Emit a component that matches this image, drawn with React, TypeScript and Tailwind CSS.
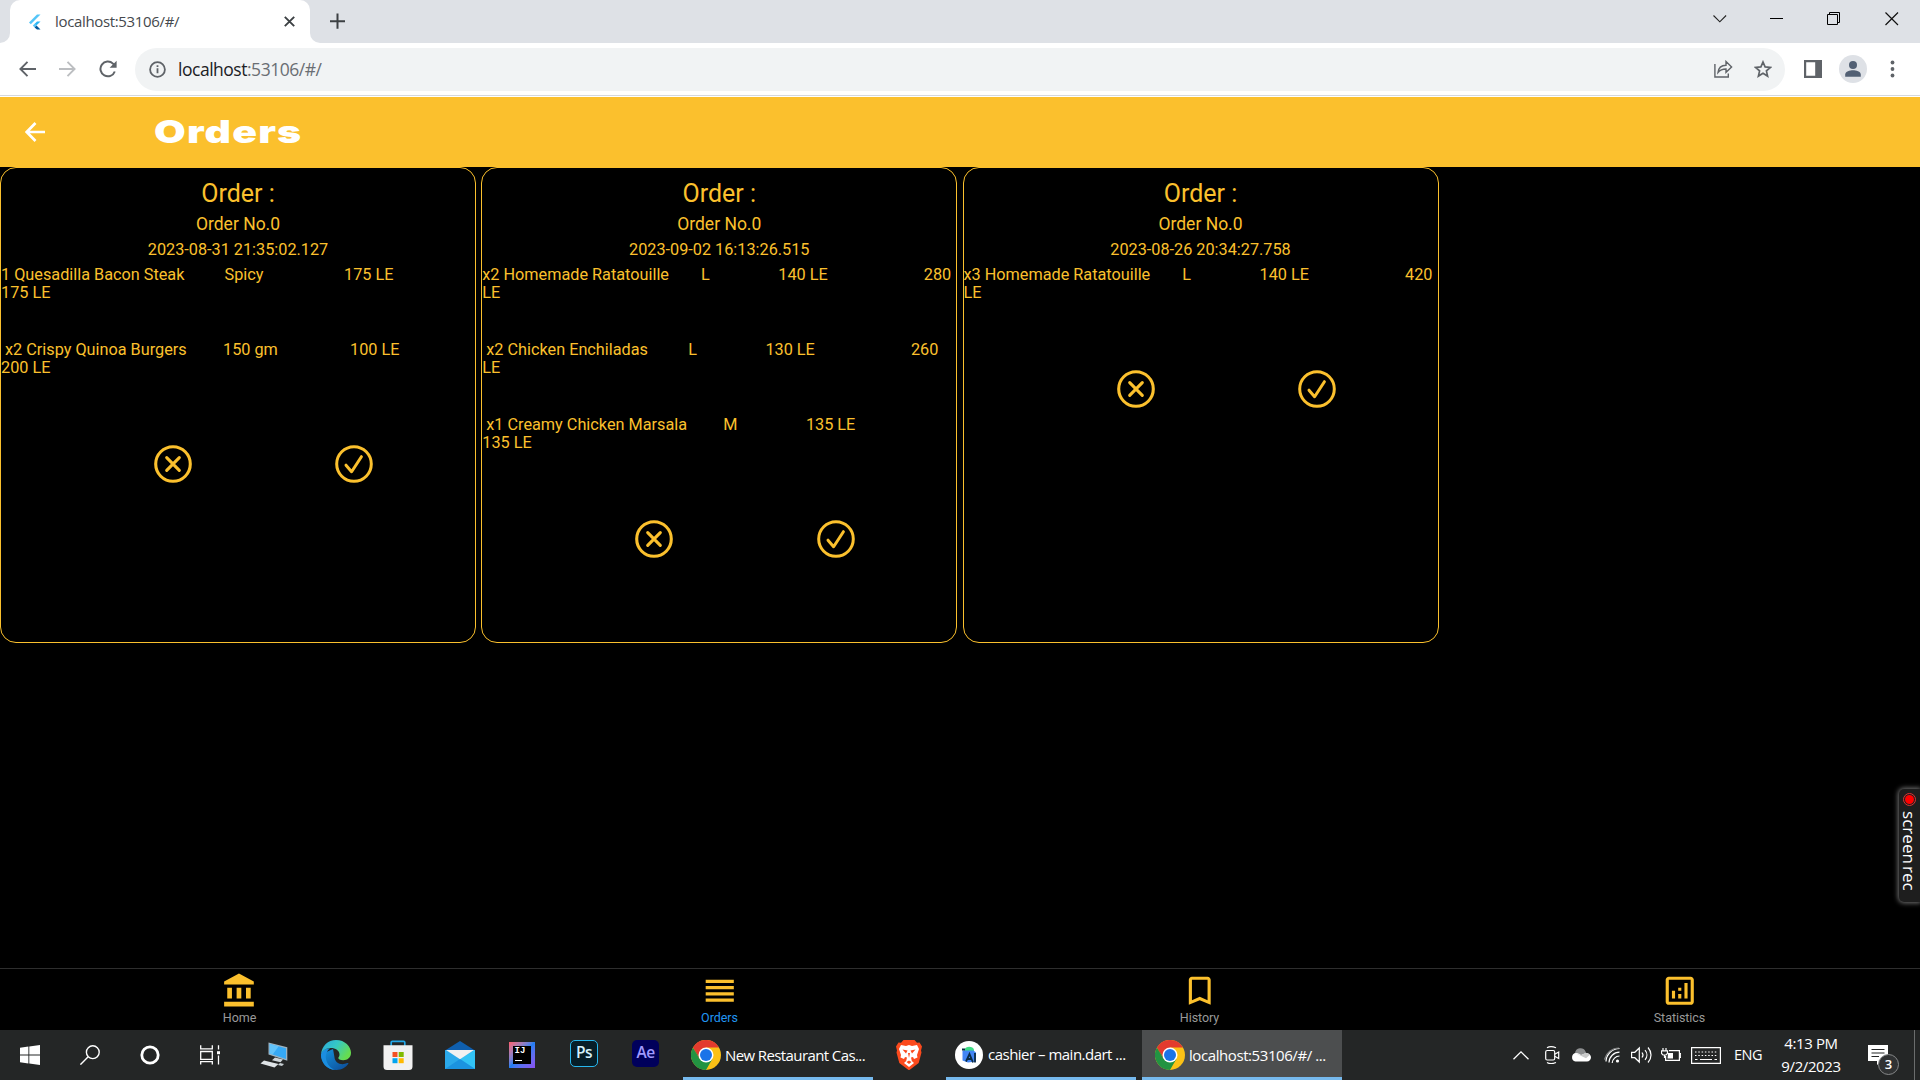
import type { ReactNode } from "react";

type Cell = { text: string; width: string };
type Item = { cells: Cell[]; wrap: string; indent: boolean };
type Order = { date: string; items: Item[] };

const orders: Order[] = [
  {
    date: "2023-08-31 21:35:02.127",
    items: [
      {
        indent: false,
        cells: [
          { text: "1 Quesadilla Bacon Steak", width: "w-[223.5px]" },
          { text: "Spicy", width: "w-[119.5px]" },
          { text: "175 LE", width: "w-[60px]" },
        ],
        wrap: "175 LE",
      },
      {
        indent: true,
        cells: [
          { text: "x2 Crispy Quinoa Burgers", width: "w-[218px]" },
          { text: "150 gm", width: "w-[127px]" },
          { text: "100 LE", width: "w-[60px]" },
        ],
        wrap: "200 LE",
      },
    ],
  },
  {
    date: "2023-09-02 16:13:26.515",
    items: [
      {
        indent: false,
        cells: [
          { text: "x2 Homemade Ratatouille", width: "w-[218.7px]" },
          { text: "L", width: "w-[77.4px]" },
          { text: "140 LE", width: "w-[145.5px]" },
          { text: "280", width: "w-[28px]" },
        ],
        wrap: "LE",
      },
      {
        indent: true,
        cells: [
          { text: "x2 Chicken Enchiladas", width: "w-[202px]" },
          { text: "L", width: "w-[77.2px]" },
          { text: "130 LE", width: "w-[145.5px]" },
          { text: "260", width: "w-[28px]" },
        ],
        wrap: "LE",
      },
      {
        indent: true,
        cells: [
          { text: "x1 Creamy Chicken Marsala", width: "w-[237px]" },
          { text: "M", width: "w-[82.7px]" },
          { text: "135 LE", width: "w-[60px]" },
        ],
        wrap: "135 LE",
      },
    ],
  },
  {
    date: "2023-08-26 20:34:27.758",
    items: [
      {
        indent: false,
        cells: [
          { text: "x3 Homemade Ratatouille", width: "w-[218.7px]" },
          { text: "L", width: "w-[77.4px]" },
          { text: "140 LE", width: "w-[145.5px]" },
          { text: "420", width: "w-[28px]" },
        ],
        wrap: "LE",
      },
    ],
  },
];

function BrowserChrome() {
  return (
    <header className="h-[97px] shrink-0 bg-white font-['Open_Sans','Noto_Sans',sans-serif]">
      <div className="flex h-[43px] items-stretch bg-[#dee1e6]">
        <div className="w-[10px] bg-white">
          <div className="h-full rounded-br-[10px] bg-[#dee1e6]" />
        </div>
        <div className="flex w-[300px] items-center rounded-t-[10px] bg-white pb-[1px]">
          <svg className="ml-[18px] mt-[1px]" width="13" height="16" viewBox="0 0 13 16">
            <path d="M1 8.5 9 .5h3.5L2.8 10.3z" fill="#54c5f8" />
            <path d="M9 7.5h3.5L8.3 11.6 6.5 9.9z" fill="#29b6f6" />
            <path d="m4.8 11.6 1.8-1.8 1.9 1.8-1.9 2z" fill="#54c5f8" />
            <path d="m6.6 13.6 1.9-2 4 4H9z" fill="#01579b" />
          </svg>
          <span className="ml-[14px] w-[220px] text-[15px] tracking-[-0.34px] text-[#45494d]">localhost:53106/#/</span>
          <svg className="ml-[9px] mt-[1px]" width="11" height="11" viewBox="0 0 11 11" stroke="#3c4043" strokeWidth="1.9">
            <path d="m.8.8 9.4 9.4M10.2.8.8 10.2" />
          </svg>
        </div>
        <div className="w-[20px] bg-white">
          <div className="h-full rounded-bl-[10px] bg-[#dee1e6]" />
        </div>
        <svg className="mt-[13px]" width="15" height="16" viewBox="0 0 15 16" stroke="#3c4043" strokeWidth="2">
          <path d="M0 8.3h15M7.5.5v15.3" />
        </svg>
        <div className="ml-auto flex items-start pr-[21px] pt-[12px]">
          <svg className="mt-[3px]" width="14" height="8" viewBox="0 0 14 8" fill="none" stroke="#222" strokeWidth="1.1">
            <path d="m.5.5 6.3 6.3L13.1.5" />
          </svg>
          <div className="ml-[43px] mt-[6px] h-px w-[13px] bg-black" />
          <svg className="ml-[44px]" width="14" height="14" viewBox="0 0 14 14" fill="none" stroke="#000">
            <path d="M.5 2.5h10v10H.5zM2.5 2.5v-2h10v10h-2" />
          </svg>
          <svg className="ml-[44px]" width="14" height="14" viewBox="0 0 14 14" stroke="#111" strokeWidth="1.2">
            <path d="m.5.5 12.5 12.5M13 .5.5 13" />
          </svg>
        </div>
      </div>
      <div className="flex h-[53px] items-center border-b border-[#d5d8dc]">
        <svg className="ml-[19px]" width="17" height="16" viewBox="0 0 17 16" fill="none" stroke="#5f6368" strokeWidth="1.9">
          <path d="M17 8H1.5M8.5.8 1.4 8l7.1 7.2" />
        </svg>
        <svg className="ml-[23px]" width="17" height="16" viewBox="0 0 17 16" fill="none" stroke="#bcbec1" strokeWidth="1.9">
          <path d="M0 8h15.5M8.5.8 15.6 8l-7.1 7.2" />
        </svg>
        <svg className="ml-[23px]" width="18" height="18" viewBox="0 0 18 18" fill="none" stroke="#5f6368" strokeWidth="2">
          <path d="M15.8 11.5A7.4 7.4 0 1 1 14 3.6l1.5 1.6" />
          <path d="M17.6.8v7h-7z" fill="#5f6368" stroke="none" />
        </svg>
        <div className="ml-[18px] flex h-[43px] w-[1650px] items-center rounded-full bg-[#f1f3f4]">
          <svg className="ml-[14px]" width="17" height="17" viewBox="0 0 17 17" fill="none" stroke="#5f6368" strokeWidth="1.8">
            <circle cx="8.5" cy="8.5" r="7.4" />
            <path d="M8.5 7.3v5M8.5 4.2v1.8" />
          </svg>
          <span className="ml-[12px] text-[17.5px] tracking-[-0.48px] text-[#6a6e73]">
            <span className="text-[#202124]">localhost</span>:53106/#/
          </span>
          <svg className="ml-auto" width="19" height="18" viewBox="0 0 19 18" fill="none" stroke="#5f6368" strokeWidth="1.4">
            <path d="M.9 4v13h13.4v-3.5" />
            <path d="M4 12.5c.5-5 3.5-7.2 8-7.3V1.5l5.6 5.5-5.6 5.3V9C8.5 9 6 10 4 12.5z" />
          </svg>
          <svg className="ml-[21px] mr-[13px]" width="18" height="18" viewBox="0 0 18 18" fill="none" stroke="#5f6368" strokeWidth="1.7">
            <path d="m9 2 2.1 4.9 5.3.5-4 3.5 1.2 5.2L9 13.3l-4.6 2.8 1.2-5.2-4-3.5 5.3-.5z" />
          </svg>
        </div>
        <svg className="ml-[19px]" width="18" height="18" viewBox="0 0 18 18">
          <path fill="#5f6368" fillRule="evenodd" d="M0 0h18v18H0zM2.2 2.2v13.6h9V2.2z" />
        </svg>
        <svg className="ml-[17px]" width="28" height="28" viewBox="0 0 28 28">
          <circle cx="14" cy="14" r="14" fill="#dee1e6" />
          <circle cx="14" cy="10" r="4" fill="#526074" />
          <path d="M6.2 21.7v-2.2c0-2.9 4.8-4.2 7.8-4.2s7.8 1.3 7.8 4.2v2.2z" fill="#526074" />
        </svg>
        <svg className="ml-[23px]" width="5" height="18" viewBox="0 0 5 18" fill="#5f6368">
          <circle cx="2.5" cy="2.5" r="1.9" />
          <circle cx="2.5" cy="9" r="1.9" />
          <circle cx="2.5" cy="15.5" r="1.9" />
        </svg>
      </div>
    </header>
  );
}

function OrderCard({ order }: { order: Order }) {
  return (
    <section className="flex h-[476px] w-[476px] shrink-0 flex-col rounded-[16px] border border-[#fbc02d] text-[16.25px] leading-[18px]">
      <h2 className="mt-[11px] text-center text-[25px] leading-[30px]">Order :</h2>
      <p className="mt-[5px] text-center text-[17.5px] leading-[20px]">Order No.0</p>
      <p className="mt-[7px] text-center">{order.date}</p>
      <div className="mt-[7px]">
        {order.items.map((item) => (
          <div key={item.cells[0].text} className="h-[75px] whitespace-nowrap">
            <div className={item.indent ? "flex pl-[4px]" : "flex"}>
              {item.cells.map((cell) => (
                <span key={cell.text} className={`${cell.width} shrink-0`}>
                  {cell.text}
                </span>
              ))}
            </div>
            <div>{item.wrap}</div>
          </div>
        ))}
      </div>
      <div className="mt-[29px] flex gap-[143.3px] pl-[153px]">
        <svg width="38" height="38" viewBox="0 0 38 38" fill="none" stroke="#fbc02d" strokeWidth="3.1" strokeLinecap="round">
          <circle cx="19" cy="19" r="17.3" />
          <path d="m12.7 12.7 12.6 12.6M25.3 12.7 12.7 25.3" />
        </svg>
        <svg width="38" height="38" viewBox="0 0 38 38" fill="none" stroke="#fbc02d" strokeWidth="3" strokeLinecap="round" strokeLinejoin="round">
          <circle cx="19" cy="19" r="17.3" />
          <path d="m11 20.2 5.6 6.5 9.8-15" />
        </svg>
      </div>
    </section>
  );
}

const tabs = [
  {
    label: "Home",
    color: "text-[#999]",
    path: "M4 10v7h3v-7H4zm6 0v7h3v-7h-3zM2 22h19v-3H2v3zm14-12v7h3v-7h-3zm-4.5-9L2 6v2h19V6l-9.5-5z",
  },
  {
    label: "Orders",
    color: "text-[#2196f3]",
    path: "M3 15h18v-2H3v2zm0 4h18v-2H3v2zm0-8h18V9H3v2zm0-6v2h18V5H3z",
  },
  {
    label: "History",
    color: "text-[#999]",
    path: "M17 3H7c-1.1 0-2 .9-2 2v16l7-3 7 3V5c0-1.1-.9-2-2-2zm0 15-5-2.18L7 18V5h10v13z",
  },
  {
    label: "Statistics",
    color: "text-[#999]",
    path: "M19 3H5c-1.1 0-2 .9-2 2v14c0 1.1.9 2 2 2h14c1.1 0 2-.9 2-2V5c0-1.1-.9-2-2-2zm0 16H5V5h14v14zM7 12h2v5H7zM15 7h2v10h-2zM11 14h2v3h-2zM11 10h2v2h-2z",
  },
];

function BottomTabs() {
  return (
    <nav className="grid h-[62px] shrink-0 grid-cols-4 border-t border-[#2e2e2e] bg-black">
      {tabs.map((tab) => (
        <div key={tab.label} className="flex flex-col items-center">
          <svg className="mt-[2.5px] shrink-0" width="37.5" height="37.5" viewBox="0 0 24 24" fill="#fbc02d">
            <path d={tab.path} />
          </svg>
          <span className={`mt-[2px] mr-[1px] text-[12.5px] leading-[14px] tracking-[-0.05px] ${tab.color}`}>{tab.label}</span>
        </div>
      ))}
    </nav>
  );
}

function ChromeLogo() {
  return (
    <svg className="shrink-0" width="30" height="30" viewBox="0 0 30 30">
      <circle cx="15" cy="15" r="15" fill="#fbc116" />
      <path d="M15 15 2 7.5A15 15 0 0 1 28 7.5H15z" fill="#e33b2e" />
      <path d="M2 7.5A15 15 0 0 0 15 30l6.5-11.2L15 15l-6.5 3.7z" fill="#229342" />
      <path d="M2 7.5 8.5 18.7 15 15V7.5z" fill="#e33b2e" />
      <path d="M2 7.5 8.5 18.7 10 20 3 9z" fill="#229342" />
      <circle cx="15" cy="15" r="7.5" fill="#fff" />
      <circle cx="15" cy="15" r="6" fill="#1a73e8" />
    </svg>
  );
}

function Slot({ width, children }: { width: string; children: ReactNode }) {
  return <div className={`${width} flex h-full shrink-0 items-center justify-center`}>{children}</div>;
}

function Taskbar() {
  return (
    <footer className="flex h-[50px] shrink-0 items-center bg-[#242626] font-['Open_Sans','Noto_Sans',sans-serif] text-white">
      <Slot width="w-[60px]">
        <svg width="20" height="20" viewBox="0 0 20 20" fill="#fff">
          <path d="M0 2.7 8.4 1.5v8H0zM9.3 1.4 20 0v9.5H9.3zM0 10.4h8.4v8.1L0 17.3zM9.3 10.4H20V20L9.3 18.6z" />
        </svg>
      </Slot>
      <Slot width="w-[60px]">
        <svg width="20" height="20" viewBox="0 0 20 20" fill="none" stroke="#fff" strokeWidth="1.4">
          <circle cx="12.8" cy="7.2" r="6.4" />
          <path d="M8.2 11.8.4 19.6" />
        </svg>
      </Slot>
      <Slot width="w-[60px]">
        <svg width="20" height="20" viewBox="0 0 20 20" fill="none" stroke="#fff" strokeWidth="2.8">
          <circle cx="10" cy="10" r="8.2" />
        </svg>
      </Slot>
      <Slot width="w-[60px]">
        <svg width="20" height="20" viewBox="0 0 20 20" fill="none" stroke="#fff" strokeWidth="1.3">
          <path d="M.7.2v3.6h11.6V.2M.7 6.5h11.6v7.8H.7zM.7 19.5v-2.9h11.6v2.9M18.5.2v4.3M18.5 10.5v9" />
          <path d="M17 6.2h3v3h-3z" fill="#fff" stroke="none" />
        </svg>
      </Slot>
      <Slot width="w-[67px]">
        <svg width="28" height="26" viewBox="0 0 28 26">
          <path d="m8.5.5 18.8 4.8v13.5L8.5 12.5z" fill="#9fb4c1" />
          <path d="m9.7 2 16.3 4.3V17L9.7 11.5z" fill="#36a9f5" />
          <path d="m9.7 2 9 2.3-6 8.3-3-1.1z" fill="#62c3fa" />
          <path d="m15 15.5 8 2-2.5 2.8-8.5-2z" fill="#cfd6da" />
          <path d="m4 18.5 14.5 3.5-4 3.5L.5 21.5z" fill="#dfe4e7" />
          <path d="m20 21 4 1-2 2-4-1z" fill="#c5cdd2" />
        </svg>
      </Slot>
      <Slot width="w-[58px]">
        <svg width="30" height="30" viewBox="0 0 30 30">
          <defs>
            <linearGradient id="edgeTop" x1="0" x2="1" y1="0" y2=".5">
              <stop offset="0" stopColor="#2aa5dc" />
              <stop offset=".5" stopColor="#35c8c6" />
              <stop offset="1" stopColor="#66dd4f" />
            </linearGradient>
            <linearGradient id="edgeBody" x1="0" x2="1" y1="0" y2="1">
              <stop offset="0" stopColor="#1596e0" />
              <stop offset="1" stopColor="#0c4a96" />
            </linearGradient>
          </defs>
          <path d="M0 14.5C0 22 5.5 30 15.5 30c5 0 9.5-2.5 11.8-6.2.4-.8-.3-1-.9-.7-6.5 3-12.8-.4-13-6.4L12 9z" fill="url(#edgeBody)" />
          <path d="M0 14.5C.7 10.5 4.500 8 9 8.500c-3 2-4.800 6-4 10.500.9 5 5 10 9.500 11C5.500 29.800 0 22.500 0 14.500z" fill="#1b8ee0" />
          <path d="M0 14.5C.6 6 7 0 15 0c9 0 15 6.500 15 12.800 0 4.800-3.700 7.500-7.700 7.500-3.300 0-5-1.200-5-2.200 0-.8 1.200-1.400 1.200-3.600C18.500 10.500 14.500 8 9.800 8 4.500 8 .9 11 0 14.500z" fill="url(#edgeTop)" />
        </svg>
      </Slot>
      <Slot width="w-[65px]">
        <svg width="30" height="30" viewBox="0 0 30 30">
          <path d="M8.2 7V2.5c0-.7.5-1.2 1.2-1.2h11.2c.7 0 1.2.5 1.2 1.2V7" fill="none" stroke="#24a8e8" strokeWidth="1.7" />
          <path d="M.5 5.3h29v21.2a3.5 3.5 0 0 1-3.5 3.5H4a3.5 3.5 0 0 1-3.5-3.5z" fill="#f1f1f1" />
          <path d="M9.5 12h5v5h-5z" fill="#f25022" />
          <path d="M15.7 12h5v5h-5z" fill="#7fba00" />
          <path d="M9.5 18.2h5v5h-5z" fill="#00a4ef" />
          <path d="M15.7 18.2h5v5h-5z" fill="#ffb900" />
        </svg>
      </Slot>
      <Slot width="w-[59px]">
        <svg width="30" height="28" viewBox="0 0 30 28">
          <path d="M0 9.5 15 0l15 9.5z" fill="#0f5fae" />
          <path d="M0 9h30v19H0z" fill="#2ba9ea" />
          <path d="M15 18 30 9v19z" fill="#32c3f5" />
          <path d="m0 28 15-10 15 10z" fill="#1b93e0" />
          <path d="M1 9h28l-14 9.3z" fill="#f1f1f1" />
        </svg>
      </Slot>
      <Slot width="w-[65px]">
        <div className="flex size-[26px] items-center justify-center bg-linear-to-br from-[#fe5a6a] via-[#1d7df2] to-[#8a4ff0]">
          <div className="flex size-[18px] flex-col bg-black pl-[2px] pt-[1px] font-['Liberation_Mono',monospace] text-[9px] font-bold leading-[9px]">
            IJ
            <div className="mt-[4px] h-[1px] w-[7px] bg-white" />
          </div>
        </div>
      </Slot>
      <Slot width="w-[60px]">
        <div className="mb-[3px] flex h-[27px] w-[28px] items-center justify-center rounded-[5px] border-[1.5px] border-[#27b8ef] bg-[#071e28] pb-[1px] text-[15.5px] font-semibold tracking-[-0.5px] text-[#d5f1fb]">Ps</div>
      </Slot>
      <Slot width="w-[63px]">
        <div className="mb-[3px] flex h-[27px] w-[27px] items-center justify-center rounded-[5px] bg-[#00005b] pb-[1px] text-[15.5px] font-semibold tracking-[-0.5px] text-[#a09bff]">Ae</div>
      </Slot>
      <div className="ml-[6px] flex h-full w-[190px] items-center border-b-[3px] border-[#76b9ed] pl-[8px] pt-[3px] text-[15px]">
        <ChromeLogo />
        <span className="ml-[4px] whitespace-nowrap tracking-[-0.6px]">New Restaurant Cas...</span>
      </div>
      <Slot width="w-[73px]">
        <svg className="mr-[2px]" width="26" height="30" viewBox="0 0 26 30">
          <path d="M7.5 0h11l2.5 2.8 2.5-.3 2.5 4-1 4 .5 2-2.8 10.5L13.5 30h-1L3.3 23 .5 12.5l.5-2-1-4 2.5-4 2.5.3z" fill="#fb4a1d" />
          <path d="m5 5 5 1 3-1 3 1 5-1 2 4-2 6 .5 2.5-3.5 1.5-1-2-2 .5.8 3.5L18 23l-5 4-5-4 2.2-2 .8-3.5-2-.5-1 2-3.5-1.5L5 15 3 9z" fill="#fff" />
          <path d="m6.5 9.5 5 1-1.5 3zM19.5 9.5l-5 1 1.5 3zM10.5 22l2.5-1.5 2.5 1.5-2.5 2zM12 13h2l-1 5z" fill="#fb4a1d" />
        </svg>
      </Slot>
      <div className="flex h-full w-[190px] items-center border-b-[3px] border-[#76b9ed] pl-[9px] pt-[2px] text-[15px]">
        <svg className="shrink-0" width="28" height="28" viewBox="0 0 28 28">
          <circle cx="14" cy="14" r="14" fill="#fff" />
          <path d="M9.5 8.5a5 4 0 0 1 9.5 0V11H9.5z" fill="#3ddc84" />
          <path d="M7.5 9.5h11l2.5 2v9l-8 1-5.5-2z" fill="#4285f4" />
          <path d="m11 20.5 3.5-7.5 3.5 8.5M12.5 18h4.5M20 12v9.5" fill="none" stroke="#0a2b45" strokeWidth="1.8" />
          <path d="M7 7.5h3v2H7z" fill="#073042" />
        </svg>
        <span className="ml-[5px] whitespace-nowrap tracking-[-0.51px]">cashier – main.dart ...</span>
      </div>
      <div className="ml-[6px] flex h-full w-[200px] items-center border-b-[3px] border-[#76b9ed] bg-[#4c4e4f] pl-[13px] pt-[3px] text-[15px]">
        <ChromeLogo />
        <span className="ml-[4px] whitespace-nowrap tracking-[-0.42px]">localhost:53106/#/ ...</span>
      </div>
      <div className="ml-auto flex h-full items-center">
        <svg width="16" height="9" viewBox="0 0 16 9" fill="none" stroke="#fff" strokeWidth="1.3">
          <path d="M.5 8.3 8 .9l7.5 7.4" />
        </svg>
        <svg className="ml-[16px]" width="15" height="18" viewBox="0 0 15 18" fill="none" stroke="#fff" strokeWidth="1.2">
          <rect x=".7" y="4.5" width="9" height="9.5" rx="1.5" />
          <path d="m9.7 8.3 4-2.3v6.5l-4-2.3M2 1.8C4 .5 8 .5 11 1.8M2 16.5c2 1.3 6 1.3 9 0" />
        </svg>
        <svg className="ml-[11px]" width="20" height="14" viewBox="0 0 20 14">
          <path d="M4 5a5.500 5.500 0 0 1 10.500-1.500L16 6l-10 5z" fill="#8d8f90" />
          <path d="M4.500 13.500A4.300 4.300 0 0 1 5 5c1.500 0 3 .6 5 2l5-2c3 .3 5 2 5 4.300 0 2.500-1.800 4.200-4 4.200z" fill="#fff" />
          <path d="M4.500 5.200 15 10.200l4-3.500c-1-1.500-2.500-1.900-4.500-1.700L10 7.200z" fill="#c9caca" />
        </svg>
        <svg className="ml-[13px]" width="16" height="17" viewBox="0 0 16 17" fill="none" stroke="#fff" strokeWidth="1.2">
          <path d="M2 14.500A13.500 13.500 0 0 1 15.500 1.500M5 15.500A10.500 10.500 0 0 1 15.500 5.200M8.200 16A7.500 7.500 0 0 1 15.500 9" />
          <path d="M.5 12.500C2 6 8 1 15 1" stroke="#808282" />
          <circle cx="13.5" cy="14" r="1.6" fill="#fff" stroke="none" />
        </svg>
        <svg className="ml-[11px]" width="21" height="18" viewBox="0 0 21 18" fill="none" stroke="#fff" strokeWidth="1.2">
          <path d="M.6 6.300h3.200L8.300 2v14l-4.500-4.300H.6zM11 6.500c1.200 1.500 1.200 3.500 0 5M14 4.200c2.500 2.800 2.500 6.800 0 9.600M17 1.500c4 4.500 4 10.500 0 15" />
        </svg>
        <svg className="ml-[9px]" width="20" height="14" viewBox="0 0 20 14" fill="none" stroke="#fff" strokeWidth="1.2">
          <path d="M8 2.600h10.400v9.800H4.600V8M18.400 5.500h1.300v4h-1.300" />
          <path d="M7 5h5v5.500H6.500z" fill="#fff" stroke="none" />
          <path d="M.5 2.800h6v2.500L5 7H2L.5 5.300zM2 0v2.500M5 0v2.500M3.500 7v3" />
        </svg>
        <svg className="ml-[10px]" width="30" height="17" viewBox="0 0 30 17" fill="none" stroke="#fff" strokeWidth="1.2">
          <path d="M.6.6h28.800v15.800H.6z" />
          <path d="M4 5h22M4 8.500h22" strokeDasharray="1.5 1.8" />
          <path d="M4 12.500h2.500M9 12.500h12M23.500 12.500H26" />
        </svg>
        <span className="ml-[13px] w-[32px] text-[14.5px] tracking-[-0.5px]">ENG</span>
        <div className="ml-[7px] w-[76px] text-center text-[15px] leading-[23px] tracking-[-0.4px]">
          <div>4:13 PM</div>
          <div>9/2/2023</div>
        </div>
        <div className="relative ml-[19px] h-[50px] w-[31px]">
          <svg className="mt-[15px]" width="20" height="20" viewBox="0 0 20 20">
            <path d="M0 0h20v16h-6l-5 4v-4H0z" fill="#fff" />
            <path d="M3.500 4.500h13M3.500 8h13M3.500 11.500H11" stroke="#242626" strokeWidth="1.2" />
          </svg>
          <div className="absolute left-[10px] top-[24px] flex size-[21px] items-center justify-center rounded-full border border-[#868889] bg-[#303233] text-[13px] font-semibold">3</div>
        </div>
        <div className="ml-[15px] mr-[5px] h-full w-px bg-[#6b6d6d]" />
      </div>
    </footer>
  );
}

export default function App() {
  return (
    <div className="relative flex h-[1080px] w-[1920px] flex-col overflow-hidden bg-black font-['Roboto',sans-serif] text-[#fbc02d]">
      <BrowserChrome />
      <div className="flex h-[70px] shrink-0 items-center bg-[#fbc02d]">
        <svg className="ml-[25px]" width="20" height="20" viewBox="0 0 20 20" fill="none" stroke="#fff" strokeWidth="2.7">
          <path d="M20 10H2M10.5 1 1.7 10l8.800 9" />
        </svg>
        <h1 className="ml-[109px] origin-left scale-x-[1.3] text-[31.5px] leading-none font-black tracking-[0.9px] text-white font-['Inter',sans-serif]">Orders</h1>
      </div>
      <main className="flex flex-1 items-start gap-[5.25px]">
        {orders.map((order) => (
          <OrderCard key={order.date} order={order} />
        ))}
      </main>
      <BottomTabs />
      <Taskbar />
      <aside className="absolute right-0 top-[789px] flex h-[113px] w-[21px] flex-col items-center rounded-l-[5px] bg-[#1e1e1e] pt-[4px] font-['Open_Sans',sans-serif] text-white shadow-[0_0_5px_1px_#777]">
        <div className="flex size-[13px] shrink-0 items-center justify-center rounded-full border border-[#d33]">
          <div className="size-[9px] rounded-full bg-[#f00]" />
        </div>
        <span className="mt-[5px] whitespace-nowrap text-[17px] leading-[19px] tracking-[0.05px] [writing-mode:vertical-rl]">
          screen<span className="mt-[2px]">rec</span>
        </span>
      </aside>
    </div>
  );
}
